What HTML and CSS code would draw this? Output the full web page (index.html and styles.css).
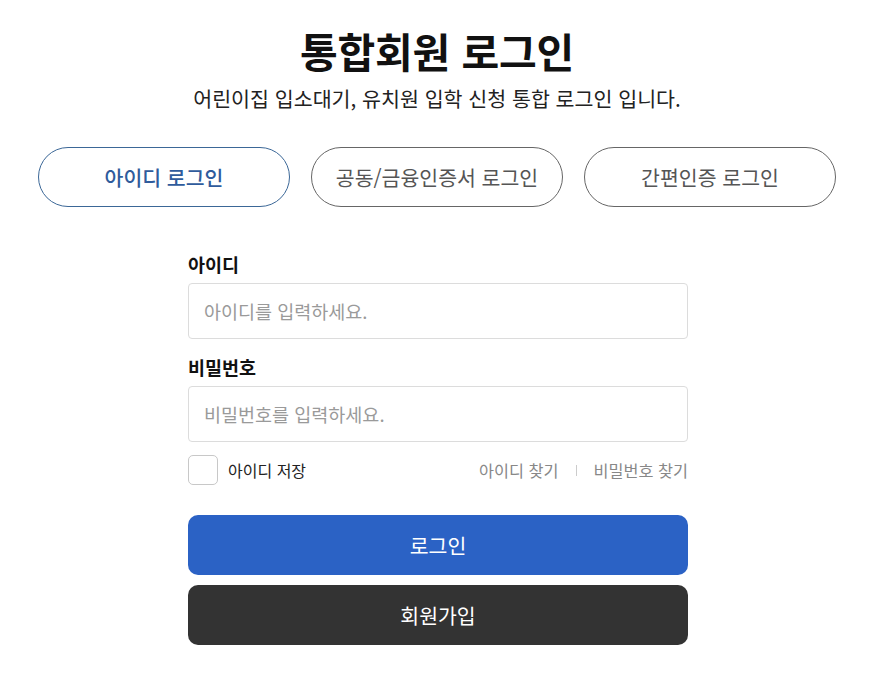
FILE: index.html
```html
<!DOCTYPE html>
<html lang="ko">
<head>
    <meta charset="UTF-8">
    <meta name="viewport" content="width=device-width, initial-scale=1.0">
    <title>통합회원 로그인</title>
    <link rel="stylesheet" href="styles.css">
</head>
<body>
    <div class="login-wrap">
        <header class="login-header">
            <h1 class="login-title">통합회원 로그인</h1>
            <p class="login-desc">어린이집 입소대기, 유치원 입학 신청 통합 로그인 입니다.</p>
        </header>

        <div class="tab-list">
            <button class="tab-btn active">아이디 로그인</button>
            <button class="tab-btn">공동/금융인증서 로그인</button>
            <button class="tab-btn">간편인증 로그인</button>
        </div>

        <form class="login-form">
            <label class="field-label" for="userId">아이디</label>
            <input class="field-input" id="userId" type="text" placeholder="아이디를 입력하세요.">

            <label class="field-label" for="userPw">비밀번호</label>
            <input class="field-input" id="userPw" type="password" placeholder="비밀번호를 입력하세요.">

            <div class="form-options">
                <label class="save-id">
                    <input type="checkbox" class="save-check">
                    <span class="check-box"></span>
                    아이디 저장
                </label>
                <div class="find-links">
                    <a href="#">아이디 찾기</a>
                    <span class="bar"></span>
                    <a href="#">비밀번호 찾기</a>
                </div>
            </div>

            <button type="button" class="submit-btn login">로그인</button>
            <button type="button" class="submit-btn join">회원가입</button>
        </form>
    </div>
</body>
</html>
```

FILE: styles.css
```css
:root {
    --blue: #2b62c5;
    --tab-blue: #3b6797;
    --dark: #333333;
    --line: #dcdcdc;
    --gray-text: #888888;
}

body {
    margin: 0;
    background: #fff;
    color: #111;
    font-family: "Noto Sans CJK KR", "Noto Sans", sans-serif;
}

.login-wrap {
    width: 798px;
    margin-left: 38px;
    padding-top: 21px;
}

/* 상단 타이틀 */
.login-header {
    text-align: center;
}

.login-title {
    margin: 0;
    font-size: 41px;
    font-weight: 700;
    line-height: 58px;
    letter-spacing: -0.2px;
}

.login-desc {
    margin: 5px 0 0;
    font-size: 20.6px;
    line-height: 28px;
    color: #222;
}

/* 탭 */
.tab-list {
    display: grid;
    grid-template-columns: repeat(3, 1fr);
    gap: 21px;
    margin-top: 35px;
}

.tab-btn {
    height: 60px;
    border: 1px solid #666;
    border-radius: 30px;
    background: #fff;
    color: #555;
    font-family: inherit;
    font-size: 20.5px;
    cursor: pointer;
}

.tab-btn.active {
    border-color: var(--tab-blue);
    color: #2f5b9c;
    font-weight: 500;
}

/* 폼 */
.login-form {
    width: 500px;
    margin: 44px 0 0 150px;
    display: flex;
    flex-direction: column;
}

.field-label {
    font-size: 18.5px;
    font-weight: 700;
    line-height: 26px;
    margin-bottom: 6px;
}

.field-input {
    height: 56px;
    box-sizing: border-box;
    border: 1px solid var(--line);
    border-radius: 4px;
    padding: 0 15px;
    font-family: inherit;
    font-size: 18.5px;
    margin-bottom: 15px;
}

.field-input::placeholder {
    color: #9a9a9a;
}

.form-options {
    display: flex;
    justify-content: space-between;
    align-items: center;
    margin-top: -2px;
}

.save-id {
    display: flex;
    align-items: center;
    gap: 10px;
    font-size: 16px;
    color: #222;
    cursor: pointer;
}

.save-check {
    display: none;
}

.check-box {
    width: 28px;
    height: 28px;
    border: 1px solid #c8c8c8;
    border-radius: 5px;
}

.find-links {
    display: flex;
    align-items: center;
    gap: 17px;
    font-size: 16.3px;
}

.find-links a {
    color: var(--gray-text);
    text-decoration: none;
}

.find-links .bar {
    width: 1px;
    height: 11px;
    background: #ccc;
}

.submit-btn {
    height: 60px;
    border: none;
    border-radius: 10px;
    color: #fff;
    font-family: inherit;
    font-size: 20.5px;
    cursor: pointer;
}

.submit-btn.login {
    background: var(--blue);
    margin-top: 30px;
}

.submit-btn.join {
    background: var(--dark);
    margin-top: 10px;
}
```
